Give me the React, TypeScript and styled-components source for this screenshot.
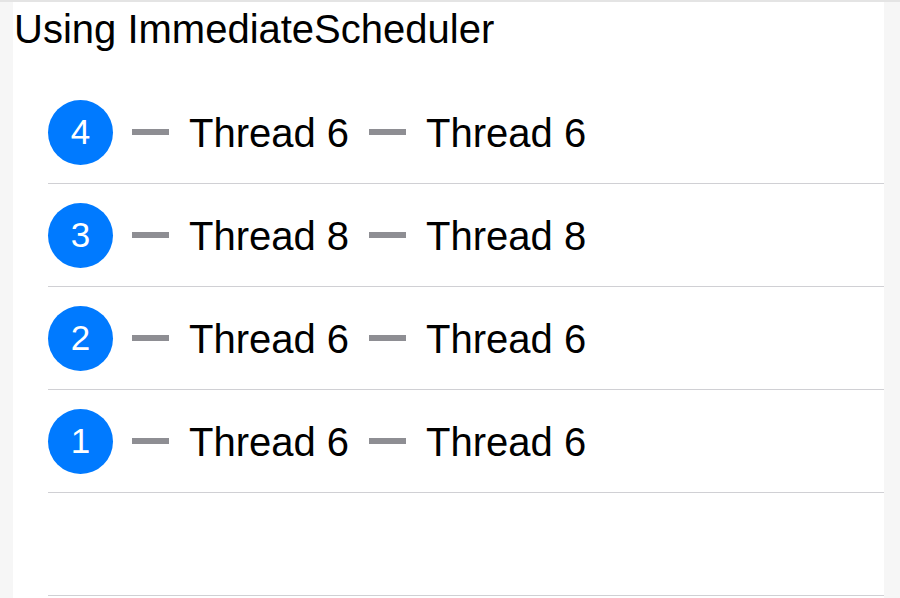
import React from 'react'
import styled, { createGlobalStyle } from 'styled-components'

const GlobalStyle = createGlobalStyle`
  html, body {
    margin: 0;
    padding: 0;
    background: #f6f6f6;
  }
  body {
    font-family: "Liberation Sans", Arial, sans-serif;
  }
`

const Page = styled.div`
  display: flex;
  height: 598px;
  border-top: 2px solid #e4e4e4;
  box-sizing: border-box;
  overflow: hidden;
`

const Gutter = styled.div<{ $width: number }>`
  flex: 0 0 ${p => p.$width}px;
  background: #f6f6f6;
`

const Content = styled.main`
  flex: 1;
  background: #ffffff;
  padding-top: 5px;
`

const Title = styled.h1`
  margin: 0 0 30px 0;
  padding-left: 1px;
  font-size: 40px;
  line-height: 44px;
  font-weight: 400;
  color: #000;
`

const List = styled.ul`
  list-style: none;
  margin: 0;
  padding: 0;
`

const Row = styled.li`
  display: flex;
  align-items: center;
  height: 102px;
  margin-left: 35px;
  border-bottom: 1px solid #d0d0d4;
`

const Badge = styled.span`
  display: flex;
  align-items: center;
  justify-content: center;
  width: 65px;
  height: 65px;
  border-radius: 50%;
  background: #007aff;
  color: #fff;
  font-size: 35px;
  margin-right: 19px;
  flex-shrink: 0;
`

const Dash = styled.span`
  display: block;
  width: 37px;
  height: 6px;
  background: #8e8e93;
  margin-right: 20px;
`

const Label = styled.span`
  font-size: 40px;
  line-height: 48px;
  padding-top: 2px;
  color: #000;
  margin-right: 20px;
  white-space: nowrap;
`

const rows = [
  { n: 4, a: 'Thread 6', b: 'Thread 6' },
  { n: 3, a: 'Thread 8', b: 'Thread 8' },
  { n: 2, a: 'Thread 6', b: 'Thread 6' },
  { n: 1, a: 'Thread 6', b: 'Thread 6' },
]

export default function App() {
  return (
    <>
      <GlobalStyle />
      <Page>
        <Gutter $width={13} />
        <Content>
          <Title>Using ImmediateScheduler</Title>
          <List>
            {rows.map(r => (
              <Row key={r.n}>
                <Badge>{r.n}</Badge>
                <Dash />
                <Label>{r.a}</Label>
                <Dash />
                <Label>{r.b}</Label>
              </Row>
            ))}
            <Row />
          </List>
        </Content>
        <Gutter $width={16} />
      </Page>
    </>
  )
}
